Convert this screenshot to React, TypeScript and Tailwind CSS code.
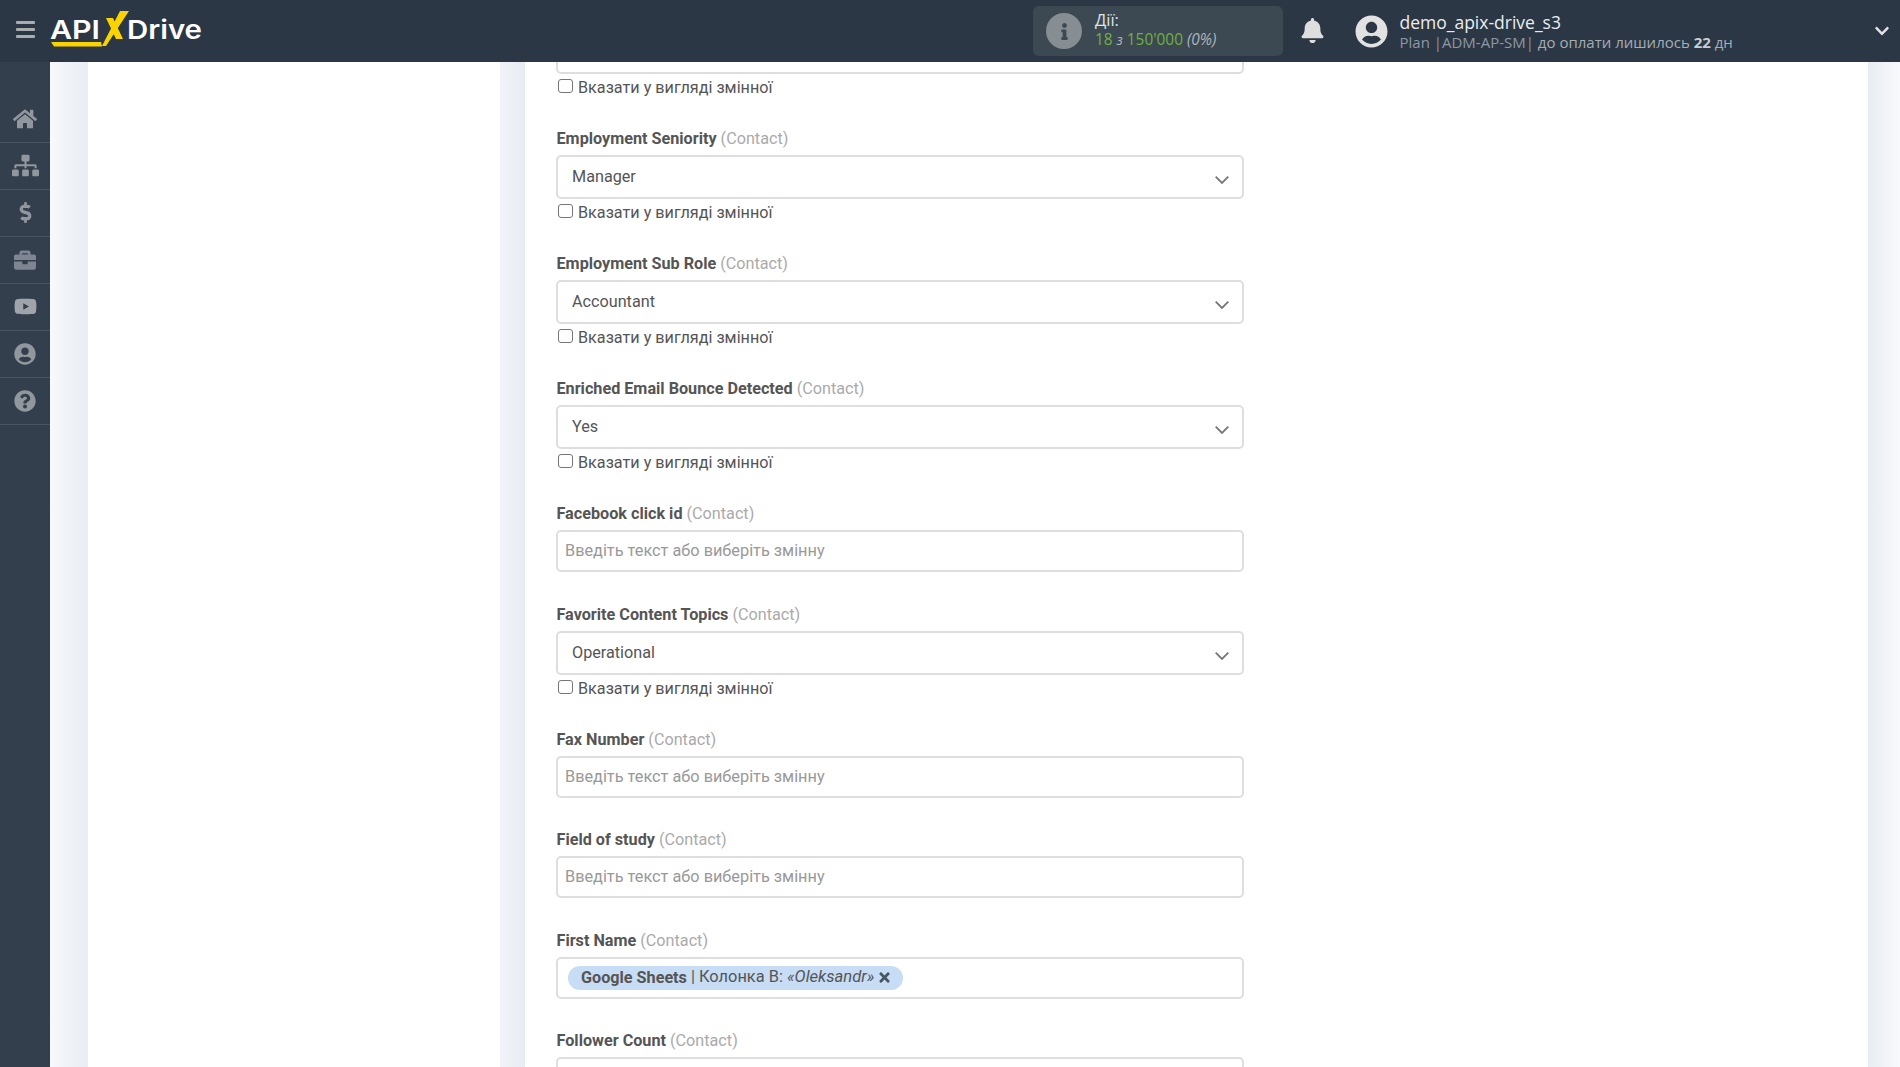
import React from "react";
import { FaHome, FaSitemap, FaDollarSign, FaBriefcase, FaYoutube, FaUserCircle, FaQuestionCircle, FaBell, FaChevronDown, FaInfo, FaTimes } from "react-icons/fa";

const nav = [
  { Icon: FaHome, cls: "text-[24px] text-[#92979e] mt-[-1px]" },
  { Icon: FaSitemap, cls: "text-[27px] text-[#92979e] mt-[-1px]" },
  { Icon: FaDollarSign, cls: "text-[21px] text-[#92979e] mt-[-1px]" },
  { Icon: FaBriefcase, cls: "text-[22px] text-[#7f8691] mt-[-1px]" },
  { Icon: FaYoutube, cls: "text-[23px] text-[#a0a4aa] mt-[-1px]" },
  { Icon: FaUserCircle, cls: "text-[22px] text-[#92979e] mt-[-1px]" },
  { Icon: FaQuestionCircle, cls: "text-[22px] text-[#92979e] mt-[-1px]" },
];

function Logo() {
  return (
    <svg width="160" height="40" viewBox="0 0 160 40" className="ml-[-1px]">
      <text x="1" y="27.5" fontFamily="Inter, sans-serif" fontWeight="600" fontSize="26" fill="#fff" textLength="50" lengthAdjust="spacingAndGlyphs">API</text>
      <text x="78" y="27.5" fontFamily="Inter, sans-serif" fontWeight="600" fontSize="26" fill="#fff" textLength="75" lengthAdjust="spacingAndGlyphs">Drive</text>
      <path d="M2 31 L52 31 L53 35.5 L5 35.5 Z" fill="#fbd300" />
      <path d="M71 0 L80 0 L57 35 L53 35 Z" fill="#fbd300" />
      <path d="M57 7 L64 7 L74 28 L67 28 Z" fill="#fbd300" />
    </svg>
  );
}

function Header() {
  return (
    <header className="h-[62px] shrink-0 bg-[#2c3745] flex items-center font-['Open_Sans',sans-serif] relative z-10">
      <div className="w-[50px] flex justify-center mt-[-4px]">
        <div className="w-[19px] flex flex-col gap-[4px]">
          <div className="h-[3px] bg-[#a9adb2] rounded-[1px]" />
          <div className="h-[3px] bg-[#a9adb2] rounded-[1px]" />
          <div className="h-[3px] bg-[#a9adb2] rounded-[1px]" />
        </div>
      </div>
      <Logo />
      <div className="ml-[824px] w-[250px] h-[50px] rounded-[6px] bg-[#3c4953] flex items-center pl-[13px]">
        <div className="w-[36px] h-[36px] rounded-full bg-[#868d93] flex items-center justify-center">
          <FaInfo className="text-[#3c4953] text-[17px]" />
        </div>
        <div className="ml-[13px] leading-[20px] mt-[-2px]">
          <div className="text-[16.5px] text-[#dfe3e6]">Дії:</div>
          <div className="text-[15.4px] text-[#6fb040]">18 <span className="italic text-[#aeb5bb] text-[14px]">з</span> 150'000 <span className="italic text-[#aeb5bb]">(0%)</span></div>
        </div>
      </div>
      <FaBell className="ml-[17px] mt-[-1px] text-[#dedede] text-[25px]" />
      <FaUserCircle className="ml-[29.5px] text-[#e2e2e2] text-[33px]" />
      <div className="ml-[12px] leading-[20px] mt-[2px]">
        <div className="text-[17.5px] text-[#e9ecef]">demo_apix-drive_s3</div>
        <div className="text-[15px] text-[#8b98a5]">Plan |ADM-AP-SM| <span className="text-[#a5adb5]">до оплати лишилось <b className="text-[#c9ced3] font-bold">22</b> дн</span></div>
      </div>
      <div className="flex-1" />
      <FaChevronDown className="mr-[10px] text-[#e2e2e2] text-[16px]" />
    </header>
  );
}

function Sidebar() {
  return (
    <aside className="w-[50px] shrink-0 bg-[#343f4e] pt-[34px]">
      {nav.map(({ Icon, cls }, i) => (
        <div key={i} className="h-[47px] border-b border-[#4a5461] flex items-center justify-center">
          <Icon className={cls} />
        </div>
      ))}
    </aside>
  );
}

function Label({ name }: { name: string }) {
  return (
    <div className="h-[24px] mb-[5px] pl-[0.5px] leading-[26px] text-[16.2px]">
      <span className="font-bold text-[#555]">{name}</span> <span className="text-[#aaa]">(Contact)</span>
    </div>
  );
}

function Check() {
  return (
    <label className="h-[26px] flex items-center text-[16.2px] text-[#555] pl-[2px]">
      <input type="checkbox" className="appearance-none w-[14.5px] h-[14.5px] border border-[#767676] rounded-[3px] bg-white mr-[5.5px] mt-[-1px]" />
      <span className="mt-[4px]">Вказати у вигляді змінної</span>
    </label>
  );
}

function Select({ value }: { value?: string }) {
  return (
    <div className="h-[43.5px] border-2 border-[#dedede] rounded-[5px] bg-white flex items-center justify-between pl-[14px] pr-[12.5px] text-[16.2px] text-[#555]">
      <span>{value}</span>
      <svg width="14" height="8" viewBox="0 0 14 8" className="mt-[7px]" fill="none" stroke="#777" strokeWidth="1.8">
        <path d="M0.7 0.7 L7 7 L13.3 0.7" />
      </svg>
    </div>
  );
}

function SelectField({ name, value }: { name: string; value: string }) {
  return (
    <div className="mb-[26.5px]">
      <Label name={name} />
      <Select value={value} />
      <Check />
    </div>
  );
}

function TextField({ name, gap }: { name: string; gap: string }) {
  return (
    <div className={gap}>
      <Label name={name} />
      <input
        type="text"
        placeholder="Введіть текст або виберіть змінну"
        className="w-full h-[42px] border-2 border-[#dedede] rounded-[5px] bg-white pl-[7px] pb-[1px] text-[16.3px] outline-none placeholder:text-[#999]"
      />
    </div>
  );
}

export default function App() {
  return (
    <div className="h-[1067px] w-[1900px] overflow-hidden flex flex-col font-['Roboto',sans-serif]">
      <Header />
      <div className="flex-1 flex min-h-0">
        <Sidebar />
        <div className="w-[38px] shrink-0 bg-gradient-to-r from-[#f7f9fd] to-[#e9ecf1]" />
        <div className="w-[412px] shrink-0 bg-white" />
        <div className="w-[25px] shrink-0 bg-gradient-to-r from-[#f1f4f9] to-[#e8ebf1]" />
        <main className="flex-1 bg-white overflow-hidden pl-[31px]">
          <div className="w-[687.5px] mt-[-32px]">
            <div className="mb-[26.5px]">
              <Select />
              <Check />
            </div>
            <SelectField name="Employment Seniority" value="Manager" />
            <SelectField name="Employment Sub Role" value="Accountant" />
            <SelectField name="Enriched Email Bounce Detected" value="Yes" />
            <TextField name="Facebook click id" gap="mb-[30px]" />
            <SelectField name="Favorite Content Topics" value="Operational" />
            <TextField name="Fax Number" gap="mb-[29.4px]" />
            <TextField name="Field of study" gap="mb-[29.4px]" />
            <div className="mb-[29px]">
              <Label name="First Name" />
              <div className="h-[42px] border-2 border-[#dedede] rounded-[5px] bg-white flex items-center pl-[10px]">
                <div className="h-[24px] rounded-[12px] bg-[#c7dcf5] flex items-center pl-[13px] pr-[11px] text-[16.2px] text-[#555] whitespace-pre">
                  <b className="font-bold">Google Sheets</b>
                  <span className="text-[16.4px]"> | Колонка B: </span>
                  <i className="text-[16.6px]">«Oleksandr»</i>
                  <FaTimes className="ml-[3px] text-[15px] text-[#4a5561]" />
                </div>
              </div>
            </div>
            <Label name="Follower Count" />
            <div className="h-[42px] border-2 border-[#dedede] rounded-[5px] bg-white" />
          </div>
        </main>
        <div className="w-[32px] shrink-0 bg-gradient-to-r from-[#e9ecf1] to-[#f7f9fd]" />
      </div>
    </div>
  );
}
